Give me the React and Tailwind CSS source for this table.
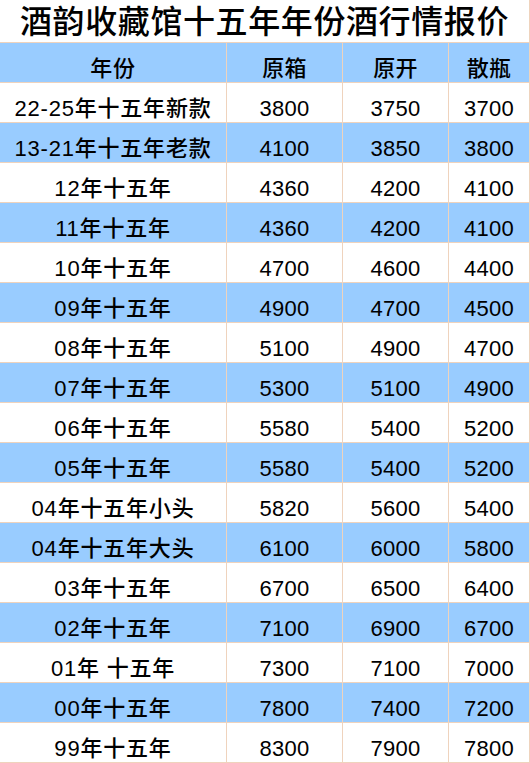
const rows = [
  ["22-25年十五年新款", "3800", "3750", "3700"],
  ["13-21年十五年老款", "4100", "3850", "3800"],
  ["12年十五年", "4360", "4200", "4100"],
  ["11年十五年", "4360", "4200", "4100"],
  ["10年十五年", "4700", "4600", "4400"],
  ["09年十五年", "4900", "4700", "4500"],
  ["08年十五年", "5100", "4900", "4700"],
  ["07年十五年", "5300", "5100", "4900"],
  ["06年十五年", "5580", "5400", "5200"],
  ["05年十五年", "5580", "5400", "5200"],
  ["04年十五年小头", "5820", "5600", "5400"],
  ["04年十五年大头", "6100", "6000", "5800"],
  ["03年十五年", "6700", "6500", "6400"],
  ["02年十五年", "7100", "6900", "6700"],
  ["01年 十五年", "7300", "7100", "7000"],
  ["00年十五年", "7800", "7400", "7200"],
  ["99年十五年", "8300", "7900", "7800"],
];

const header = ["年份", "原箱", "原开", "散瓶"];

function Cell({ children, blue, first }) {
  return (
    <div
      className={`h-[40px] flex items-center justify-center pt-[13px] border-r border-b border-[#efd3bd] text-[22px] leading-none font-medium text-black whitespace-nowrap ${
        blue ? "bg-[#99ccff]" : "bg-white"
      } ${first ? "tracking-[0.8px]" : "tracking-[0.3px]"}`}
    >
      {children}
    </div>
  );
}

export default function App() {
  return (
    <div
      className="w-[530px] h-[763px] bg-white overflow-hidden"
      style={{ fontFamily: '"Liberation Sans", "Noto Sans CJK SC", sans-serif' }}
    >
      {/* title */}
      <div className="h-[43px] flex items-center justify-center pt-[1px] border-r border-b border-[#efd3bd] w-[530px] text-[32px] leading-none font-medium text-black tracking-[0.6px] whitespace-nowrap">
        酒韵收藏馆十五年年份酒行情报价
      </div>

      <div className="grid grid-cols-[227px_116px_106px_81px]">
        {header.map((h, j) => (
          <Cell key={h} blue first={j === 0}>
            {h}
          </Cell>
        ))}
        {rows.map((r, i) =>
          r.map((c, j) => (
            <Cell key={i + "-" + j} blue={i % 2 === 1} first={j === 0}>
              {c}
            </Cell>
          ))
        )}
      </div>
    </div>
  );
}
